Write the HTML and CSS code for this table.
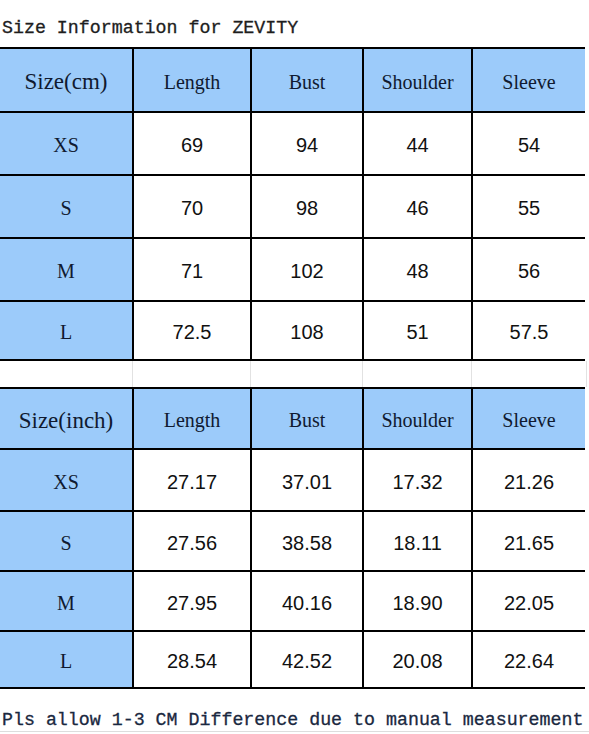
FILE: index.html
```html
<!DOCTYPE html>
<html>
<head>
<meta charset="utf-8">
<link rel="stylesheet" href="styles.css">
</head>
<body>
<div class="page">
  <div class="title">Size Information for ZEVITY</div>

  <div class="grid grid-cm">
    <div class="c head first big">Size(cm)</div>
    <div class="c head">Length</div>
    <div class="c head">Bust</div>
    <div class="c head">Shoulder</div>
    <div class="c head">Sleeve</div>

    <div class="c size">XS</div><div class="c num">69</div><div class="c num">94</div><div class="c num">44</div><div class="c num">54</div>
    <div class="c size">S</div><div class="c num">70</div><div class="c num">98</div><div class="c num">46</div><div class="c num">55</div>
    <div class="c size">M</div><div class="c num">71</div><div class="c num">102</div><div class="c num">48</div><div class="c num">56</div>
    <div class="c size">L</div><div class="c num">72.5</div><div class="c num">108</div><div class="c num">51</div><div class="c num">57.5</div>
  </div>

  <div class="spacer">
    <div class="s"></div><div class="s"></div><div class="s"></div><div class="s"></div><div class="s"></div>
  </div>

  <div class="grid grid-inch">
    <div class="c head first big">Size(inch)</div>
    <div class="c head">Length</div>
    <div class="c head">Bust</div>
    <div class="c head">Shoulder</div>
    <div class="c head">Sleeve</div>

    <div class="c size">XS</div><div class="c num">27.17</div><div class="c num">37.01</div><div class="c num">17.32</div><div class="c num">21.26</div>
    <div class="c size">S</div><div class="c num">27.56</div><div class="c num">38.58</div><div class="c num">18.11</div><div class="c num">21.65</div>
    <div class="c size">M</div><div class="c num">27.95</div><div class="c num">40.16</div><div class="c num">18.90</div><div class="c num">22.05</div>
    <div class="c size">L</div><div class="c num">28.54</div><div class="c num">42.52</div><div class="c num">20.08</div><div class="c num">22.64</div>
  </div>

  <div class="footer">Pls allow 1-3 CM Difference due to manual measurement</div>
</div>
</body>
</html>
```

FILE: styles.css
```css
html, body {
  margin: 0;
  padding: 0;
  background: #ffffff;
}

.page {
  width: 589px;
  height: 734px;
  overflow: hidden;
  background: #ffffff;
}

.title {
  font-family: "Liberation Mono", monospace;
  font-size: 18.3px;
  line-height: 21px;
  color: #1e1e1e;
  padding: 18px 0 8px 2px;
  white-space: nowrap;
  -webkit-text-stroke: 0.3px #1e1e1e;
}

.grid {
  display: grid;
  grid-template-columns: 132px 116px 110px 107px 112px;
  column-gap: 2px;
  row-gap: 2px;
  background: #000000;
  padding: 2px 2px 2px 0;
  width: 583px;
}

.grid-cm {
  grid-template-rows: 62px 61px 61px 61px 57px;
}

.grid-inch {
  grid-template-rows: 59px 60px 58px 58px 55px;
}

.c {
  display: flex;
  align-items: center;
  justify-content: center;
  background: #ffffff;
  padding-top: 4px;
  box-sizing: border-box;
}

.head {
  background: #9ccbfa;
  font-family: "Liberation Serif", serif;
  font-size: 20px;
  color: #101a30;
}

.head.big {
  font-size: 23px;
}

.size {
  background: #9ccbfa;
  font-family: "Liberation Serif", serif;
  font-size: 20px;
  color: #101a30;
}

.num {
  font-family: "Liberation Sans", sans-serif;
  font-size: 20px;
  color: #111111;
}

.spacer {
  display: grid;
  grid-template-columns: 133px 118px 112px 109px 115px;
  height: 26px;
  width: 587px;
}

.s {
  border-right: 1px solid #e2e2e2;
}

.footer {
  font-family: "Liberation Mono", monospace;
  font-size: 18.3px;
  line-height: 21px;
  color: #1a2840;
  padding: 21px 0 0 2px;
  white-space: nowrap;
  border-bottom: 1px solid #dddddd;
  -webkit-text-stroke: 0.3px #1a2840;
}
```
